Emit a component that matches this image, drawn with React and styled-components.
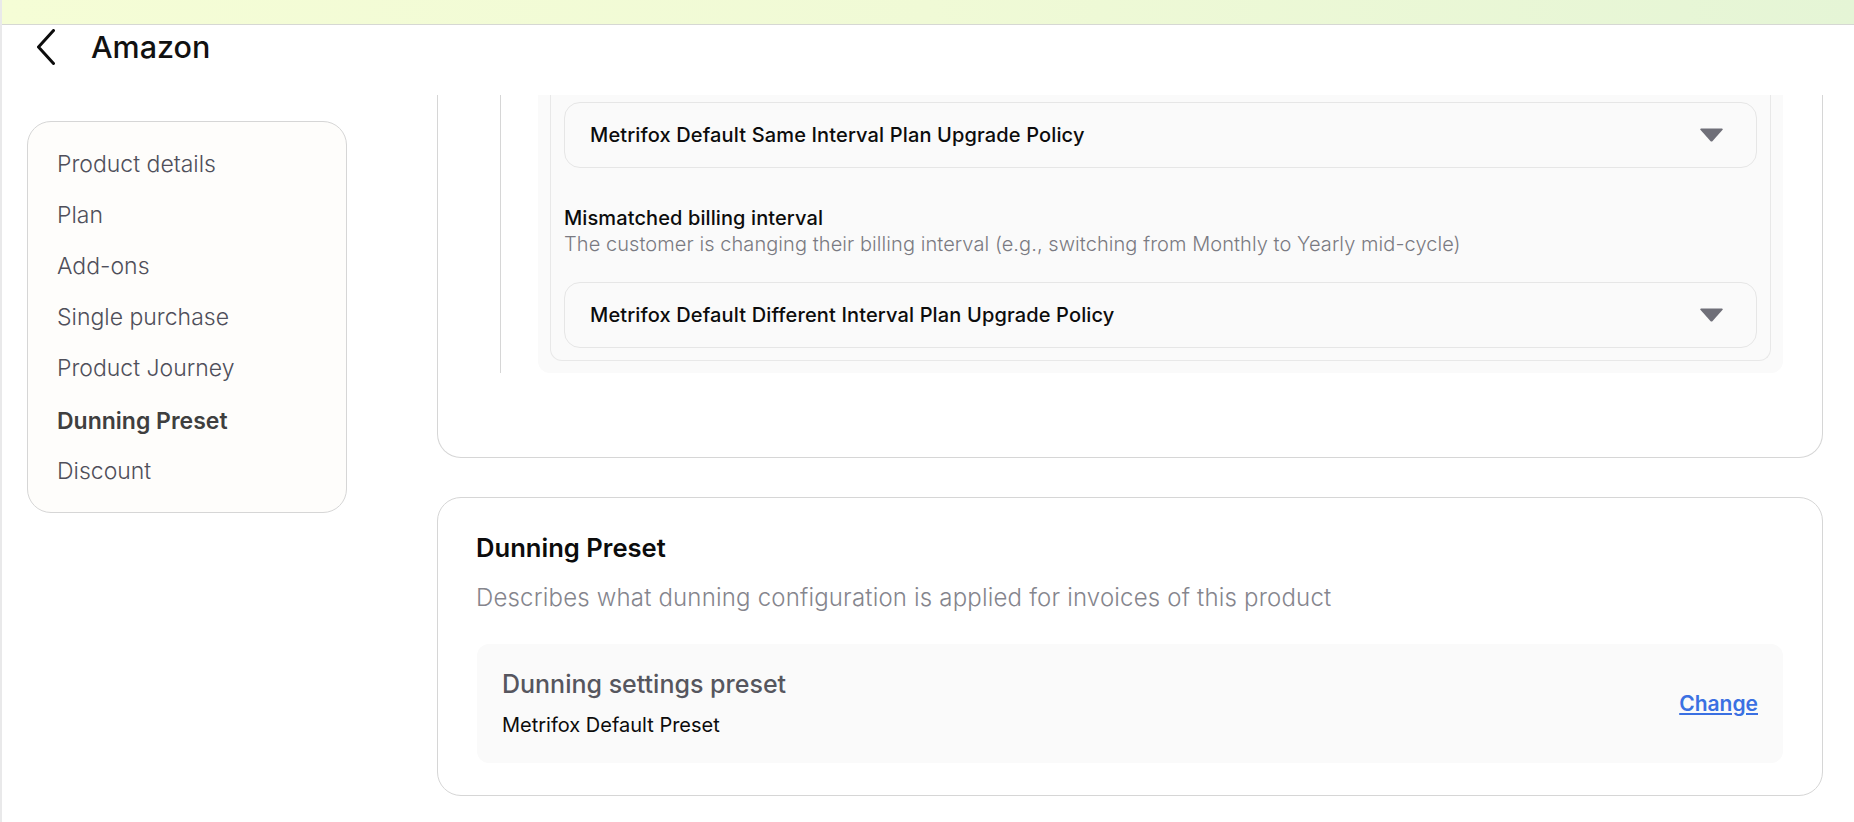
import styled, { createGlobalStyle } from "styled-components";

const GlobalStyle = createGlobalStyle`
  html, body {
    margin: 0;
    padding: 0;
    background: #fff;
    font-family: "Inter", "Liberation Sans", sans-serif;
  }
  * {
    box-sizing: border-box;
  }
`;

const Page = styled.div`
  width: 1854px;
  height: 822px;
  overflow: hidden;
  display: flex;
  flex-direction: column;
  background: #fff;
  border-left: 2px solid #e9e9ea;
`;

const Banner = styled.div`
  height: 25px;
  flex: none;
  background: linear-gradient(90deg, #f5fdd6 0%, #f0fad6 50%, #e5f5d6 100%);
  border-bottom: 1px solid #d6d8d3;
`;

const Header = styled.header`
  height: 70px;
  flex: none;
  display: flex;
  align-items: center;
  gap: 36px;
  padding: 0 0 26px 35px;
`;

const BackIcon = styled.svg`
  width: 18px;
  height: 36px;
  flex: none;
`;

const Title = styled.h1`
  margin: 0;
  font-size: 30.5px;
  font-weight: 500;
  line-height: 44px;
  color: #111;
`;

const Body = styled.div`
  flex: 1;
  min-height: 0;
  display: flex;
  gap: 90px;
  padding-left: 25px;
`;

const Sidebar = styled.nav`
  width: 320px;
  height: 392px;
  margin-top: 26px;
  flex: none;
  padding: 16px 29px;
  background: #fefdfb;
  border: 1px solid #d6d6d6;
  border-radius: 24px;
`;

const NavItem = styled.div`
  height: ${(p) => (p.$active ? "52px" : "51px")};
  padding-top: ${(p) => (p.$active ? "4px" : "0")};
  display: flex;
  align-items: center;
  font-size: 23px;
  font-weight: ${(p) => (p.$active ? 600 : 300)};
  color: ${(p) => (p.$active ? "#3f3f3f" : "#4f4f5a")};
`;

const Main = styled.main`
  width: 1386px;
  flex: none;
  display: flex;
  flex-direction: column;
  gap: 39px;
`;

const PolicyCard = styled.section`
  padding: 0 39px 84px 62px;
  background: #fff;
  border: 1px solid #d6d6d6;
  border-top: 0;
  border-radius: 0 0 24px 24px;
`;

const Tree = styled.div`
  padding-left: 37px;
  border-left: 1px solid #d6d6d6;
`;

const TreePanel = styled.div`
  padding: 0 12px 12px;
  background: #fafafa;
  border-radius: 0 0 12px 12px;
`;

const TreeInner = styled.div`
  padding: 7px 13px 12px;
  border: 1px solid #e8e8e8;
  border-top: 0;
  border-radius: 0 0 12px 12px;
`;

const Select = styled.div`
  height: 66px;
  display: flex;
  align-items: center;
  justify-content: space-between;
  padding: 0 33px 0 25px;
  background: #fafafa;
  border: 1px solid #e6e6e6;
  border-radius: 16px;
`;

const SelectText = styled.span`
  font-size: 20px;
  font-weight: 500;
  letter-spacing: 0.14px;
  color: #0c0c0c;
`;

const Caret = styled.svg`
  width: 23px;
  height: 14px;
  flex: none;
`;

const RuleHead = styled.div`
  margin: 37px 0 25px;
`;

const RuleTitle = styled.div`
  font-size: 20px;
  font-weight: 500;
  line-height: 26px;
  letter-spacing: 0.1px;
  color: #0c0c0c;
`;

const RuleNote = styled.div`
  font-size: 20px;
  font-weight: 300;
  line-height: 26px;
  letter-spacing: 0.07px;
  color: #7a7a82;
`;

const PresetCard = styled.section`
  height: 299px;
  padding: 0 39px;
  background: #fff;
  border: 1px solid #d6d6d6;
  border-radius: 24px;
`;

const PresetTitle = styled.h2`
  margin: 32px 0 0 -1px;
  font-size: 25.6px;
  font-weight: 600;
  line-height: 36px;
  color: #0c0c0c;
`;

const PresetNote = styled.p`
  margin: 14px 0 0 -1px;
  font-size: 24px;
  font-weight: 300;
  line-height: 36px;
  letter-spacing: 0.18px;
  color: #85858d;
`;

const PresetBox = styled.div`
  height: 119px;
  margin-top: 28px;
  display: flex;
  align-items: center;
  justify-content: space-between;
  padding: 0 25px;
  background: #fafafa;
  border-radius: 12px;
`;

const PresetInfo = styled.div`
  padding-bottom: 3px;
`;

const PresetLabel = styled.div`
  font-size: 25px;
  font-weight: 500;
  line-height: 36px;
  color: #56565e;
`;

const PresetValue = styled.div`
  margin-top: 10px;
  font-size: 20px;
  font-weight: 400;
  line-height: 26px;
  color: #0c0c0c;
`;

const ChangeLink = styled.a`
  font-size: 21px;
  font-weight: 600;
  color: #3a70e2;
  text-decoration: underline;
`;

const navItems = [
  "Product details",
  "Plan",
  "Add-ons",
  "Single purchase",
  "Product Journey",
  "Dunning Preset",
  "Discount",
];

const CaretDown = () => (
  <Caret viewBox="0 0 23 14">
    <path d="M1 0.5h21a.8.8 0 0 1 .6 1.3L12.6 13a1.5 1.5 0 0 1-2.2 0L.4 1.8A.8.8 0 0 1 1 .5z" fill="#6f6f78" />
  </Caret>
);

export default function App() {
  return (
    <>
      <GlobalStyle />
      <Page>
        <Banner />
        <Header>
          <BackIcon viewBox="0 0 18 36" fill="none">
            <path d="M16.5 1.5 1.5 18l15 16.5" stroke="#0c0c0c" strokeWidth="3" strokeLinecap="round" strokeLinejoin="round" />
          </BackIcon>
          <Title>Amazon</Title>
        </Header>
        <Body>
          <Sidebar>
            {navItems.map((item) => (
              <NavItem key={item} $active={item === "Dunning Preset"}>
                {item}
              </NavItem>
            ))}
          </Sidebar>
          <Main>
            <PolicyCard>
              <Tree>
                <TreePanel>
                  <TreeInner>
                    <Select>
                      <SelectText>Metrifox Default Same Interval Plan Upgrade Policy</SelectText>
                      <CaretDown />
                    </Select>
                    <RuleHead>
                      <RuleTitle>Mismatched billing interval</RuleTitle>
                      <RuleNote>The customer is changing their billing interval (e.g., switching from Monthly to Yearly mid-cycle)</RuleNote>
                    </RuleHead>
                    <Select>
                      <SelectText>Metrifox Default Different Interval Plan Upgrade Policy</SelectText>
                      <CaretDown />
                    </Select>
                  </TreeInner>
                </TreePanel>
              </Tree>
            </PolicyCard>
            <PresetCard>
              <PresetTitle>Dunning Preset</PresetTitle>
              <PresetNote>Describes what dunning configuration is applied for invoices of this product</PresetNote>
              <PresetBox>
                <PresetInfo>
                  <PresetLabel>Dunning settings preset</PresetLabel>
                  <PresetValue>Metrifox Default Preset</PresetValue>
                </PresetInfo>
                <ChangeLink href="#">Change</ChangeLink>
              </PresetBox>
            </PresetCard>
          </Main>
        </Body>
      </Page>
    </>
  );
}
